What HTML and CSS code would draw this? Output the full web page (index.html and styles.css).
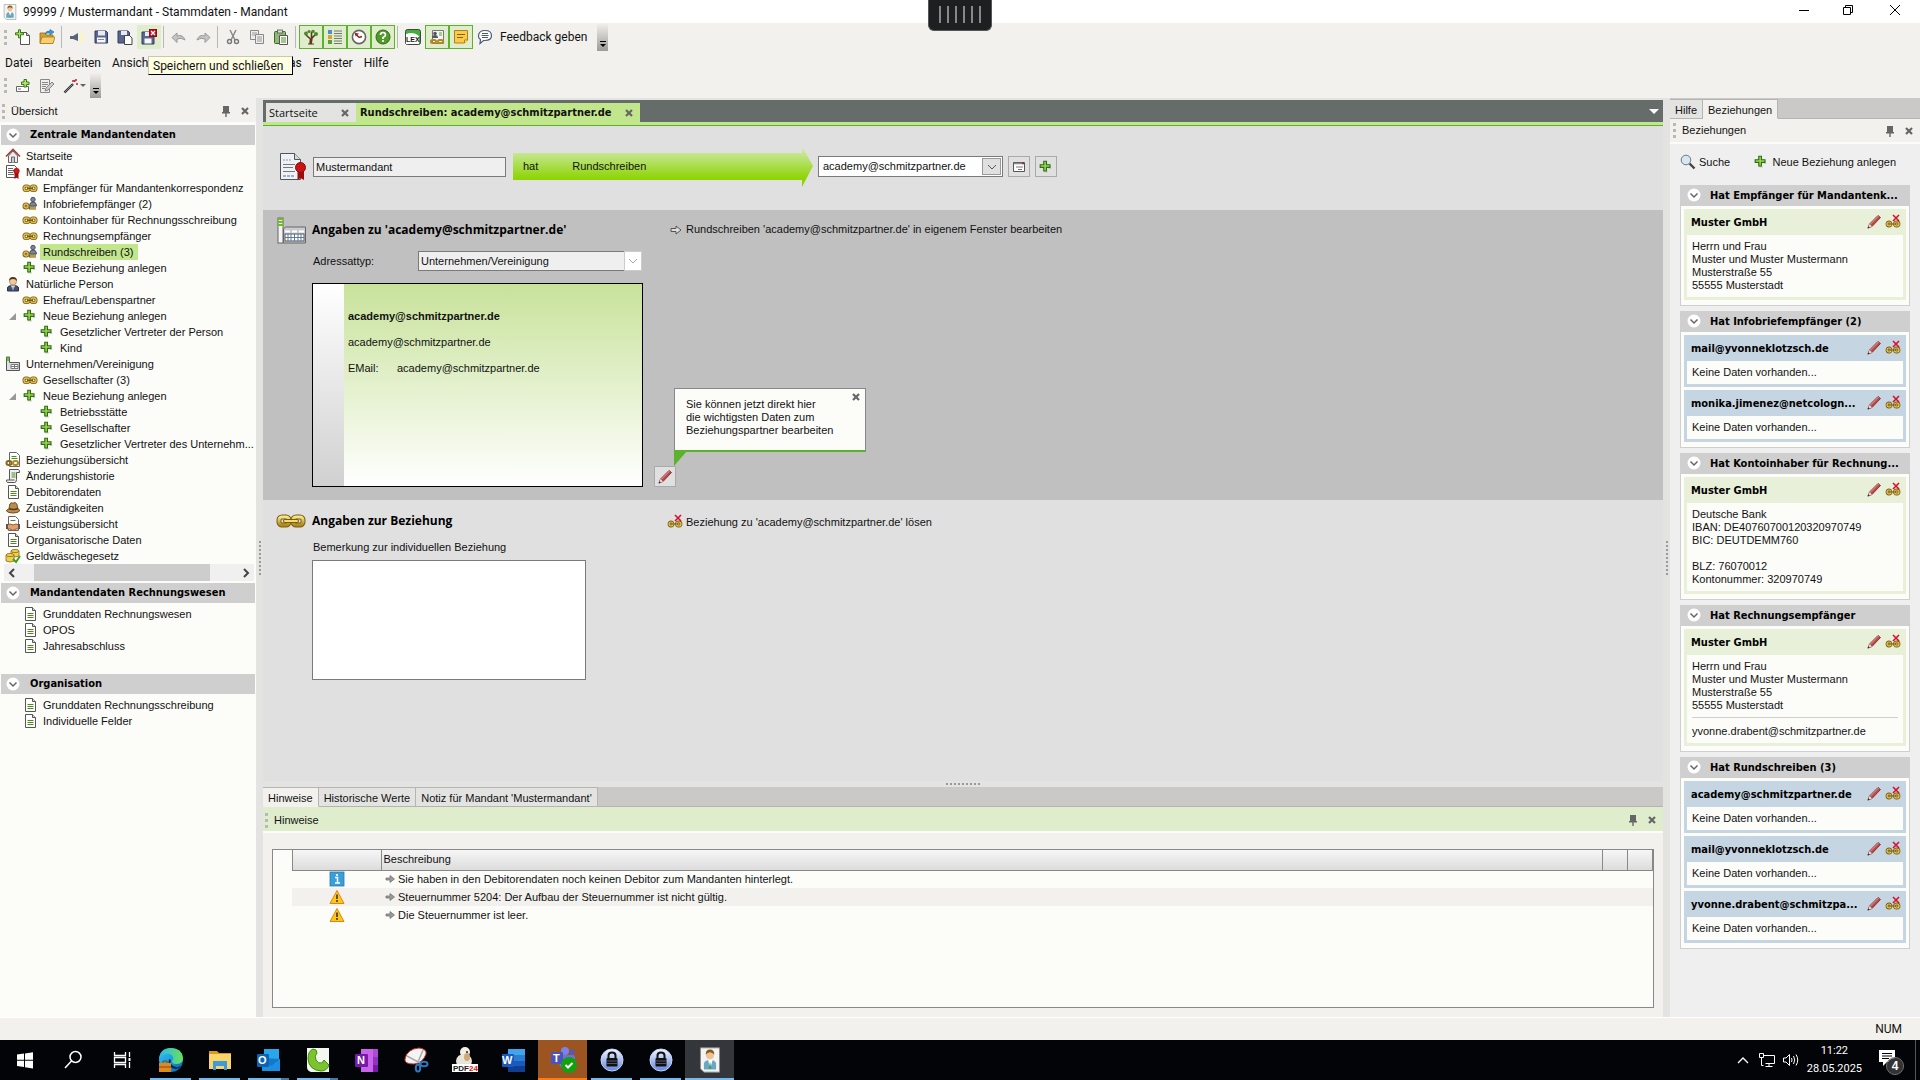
FILE: index.html
```html
<!DOCTYPE html>
<html lang="de">
<head>
    <meta charset="UTF-8">
    <meta name="viewport" content="width=device-width, initial-scale=1.0">
    <title>99999 / Mustermandant - Stammdaten - Mandant</title>
    <link rel="stylesheet" href="styles.css">
</head>
<body>
    <!-- Icon sprite -->
    <svg class="sprite" aria-hidden="true">
        <defs>
            <linearGradient id="g-metal" x1="0" y1="0" x2="0" y2="1"><stop offset="0" stop-color="#f6e58a"/><stop offset="1" stop-color="#b08a1c"/></linearGradient>
            <linearGradient id="g-arrow" x1="0" y1="0" x2="0" y2="1"><stop offset="0" stop-color="#d9ebc0"/><stop offset="0.2" stop-color="#c3e68c"/><stop offset="0.8" stop-color="#8ed404"/><stop offset="1" stop-color="#8ed404"/></linearGradient>
            <linearGradient id="g-edge" x1="0" y1="0" x2="1" y2="1"><stop offset="0" stop-color="#35c1f1"/><stop offset="0.5" stop-color="#1b9de2"/><stop offset="1" stop-color="#0c59a4"/></linearGradient>
            <linearGradient id="g-edge2" x1="0" y1="0" x2="1" y2="0"><stop offset="0" stop-color="#2bb8ee"/><stop offset="1" stop-color="#6ae05a"/></linearGradient>
            <linearGradient id="g-lock" x1="0" y1="0" x2="0" y2="1"><stop offset="0" stop-color="#f2f5ff"/><stop offset="1" stop-color="#5f86e0"/></linearGradient>
        </defs>
        <symbol id="i-plus" viewBox="0 0 18 18"><path d="M7 14.500h4M12 10.500h3" stroke="#bbb"/><path d="M6.500 2.500h3v4h4v3h-4v4h-3v-4h-4v-3h4z" fill="#9fd455" stroke="#2c7010" stroke-width="1.300"/></symbol>
        <symbol id="i-chain" viewBox="0 0 16 16"><g fill="none" stroke="#7a5c10" stroke-width="3"><rect x="2" y="6" width="5" height="4.500" rx="2"/><rect x="9" y="6" width="5" height="4.500" rx="2"/></g><g fill="none" stroke="#e0c050" stroke-width="1.400"><rect x="2" y="6" width="5" height="4.500" rx="2"/><rect x="9" y="6" width="5" height="4.500" rx="2"/></g><path d="M5 8.300h6" stroke="#7a5c10" stroke-width="1.500"/></symbol>
        <symbol id="i-chain-big" viewBox="0 0 30 16"><g fill="none" stroke="#7a5c10" stroke-width="5"><rect x="3" y="4" width="10" height="8" rx="3"/><rect x="17" y="4" width="10" height="8" rx="3"/></g><g fill="none" stroke="url(#g-metal)" stroke-width="3"><rect x="3" y="4" width="10" height="8" rx="3"/><rect x="17" y="4" width="10" height="8" rx="3"/></g><path d="M9 8h12" stroke="#7a5c10" stroke-width="4" stroke-linecap="round"/><path d="M9 8h12" stroke="#f0dc70" stroke-width="2" stroke-linecap="round"/></symbol>
        <symbol id="i-chain-person" viewBox="0 0 16 16"><g fill="none" stroke="#7a5c10" stroke-width="3"><rect x="2" y="8" width="4" height="4" rx="2"/><path d="M7 12h7"/></g><g fill="none" stroke="#e0c050" stroke-width="1.300"><rect x="2" y="8" width="4" height="4" rx="2"/><path d="M8 12h6"/></g><circle cx="11" cy="3.500" r="2.200" fill="#7d8594" stroke="#4c5566"/><path d="M7.500 10q0-4 3.500-4t3.500 4z" fill="#7d8594" stroke="#4c5566"/></symbol>
        <symbol id="i-unlink" viewBox="0 0 16 16"><g fill="none" stroke="#7a5c10" stroke-width="2.800"><rect x="2" y="8" width="4" height="4" rx="2"/><rect x="9.500" y="8" width="4.500" height="4" rx="2"/></g><g fill="none" stroke="#e8cc58" stroke-width="1.200"><rect x="2" y="8" width="4" height="4" rx="2"/><rect x="9.500" y="8" width="4.500" height="4" rx="2"/></g><path d="M5 10h6" stroke="#7a5c10"/><path d="M8 1l6 6M14 1l-6 6" stroke="#d81030" stroke-width="1.600"/></symbol>
        <symbol id="i-pencil" viewBox="0 0 16 16"><path d="M2 14l1.500-4L12 1.500l2.500 2L6 12.500z" fill="#b84a4a" stroke="#7a2020" stroke-width="0.800"/><path d="M4 10.500l8.500-8.500" stroke="#e9a0a0"/><path d="M2 14l1.500-4L6 12.500z" fill="#e5dccb"/><path d="M1.500 14.500l.8-2.200 1.500 1.500z" fill="#2a3050"/></symbol>
        <symbol id="i-doc" viewBox="0 0 16 16"><path d="M3.500 1.500h7l3 3v10h-10z" fill="#fff" stroke="#555"/><path d="M10.500 1.500v3h3" fill="#ddd" stroke="#555"/><path d="M5.500 7.500h6M5.500 9.500h6M5.500 11.500h6" stroke="#4c8a20"/></symbol>
        <symbol id="i-doc-chain" viewBox="0 0 16 16"><path d="M4.500 .5h7l3 3v11h-10z" fill="#fff" stroke="#666"/><path d="M6.500 4.500h5M6.500 6.500h6" stroke="#4c8a20"/><rect x="1.500" y="9" width="5" height="4" rx="2" fill="none" stroke="#8a6a18" stroke-width="2"/><rect x="8" y="9" width="5" height="4" rx="2" fill="none" stroke="#b08a30" stroke-width="2"/></symbol>
        <symbol id="i-scroll" viewBox="0 0 16 16"><path d="M4.500 1.500h9q1 0 1 3h-3v7q0 3-2 3h-7q-1 0-1-2.500h3z" fill="#f0f0f0" stroke="#555"/><path d="M6.500 5h4M6.500 7h4M6.500 9h4" stroke="#4c8a20"/><path d="M4.500 12h5" stroke="#555"/></symbol>
        <symbol id="i-hat" viewBox="0 0 16 16"><path d="M4 9l.8-5q1.200-2 3-.8 3-1.500 4 .8L13 9q2 .5 1.500 2-1.500 2-6.500 2T1.500 11Q1 10 4 9z" fill="#b98a52" stroke="#74501f"/><path d="M4 8.500q4 2 9 0" stroke="#5a3a12" fill="none" stroke-width="1.500"/></symbol>
        <symbol id="i-doc-hands" viewBox="0 0 16 16"><path d="M3.500 .5h7l3 3v11h-10z" fill="#fff" stroke="#666"/><path d="M5.500 4.500h5" stroke="#4c8a20"/><path d="M2 9l3-1 3 1 3-1 3 1v4l-3 0-3 1.500L5 13H2z" fill="#e0a070" stroke="#9a5a30"/><path d="M1 8h2v5H1zM13 8h2v5h-2z" fill="#555"/></symbol>
        <symbol id="i-coins" viewBox="0 0 16 16"><g fill="#ecd050" stroke="#8a6a18" stroke-width=".8"><path d="M6 3v5q4 2 8 0V3z"/><ellipse cx="10" cy="3" rx="4" ry="1.600"/><path d="M1 7v6q4 2 8 0V7z"/><ellipse cx="5" cy="7" rx="4" ry="1.600"/></g><path d="M8 11l3 3 4-6" fill="none" stroke="#3f9d1a" stroke-width="2"/></symbol>
        <symbol id="i-home" viewBox="0 0 16 16"><path d="M3.500 8v6.500h9V8L8 3z" fill="#eee" stroke="#666"/><path d="M1 8.500l7-7 7 7" fill="none" stroke="#9c4040" stroke-width="1.600"/><path d="M6.500 14.500V9h3v5.500" fill="#c9cdd2" stroke="#666"/></symbol>
        <symbol id="i-mandat" viewBox="0 0 16 16"><path d="M1.500 1.500h8l2 2v10h-10z" fill="#fff" stroke="#555"/><path d="M3 4.500h5M3 6.500h6M3 8.500h5M3 10.500h6" stroke="#666"/><path d="M9.500 9v6l2-1.500 2 1.500V9z" fill="#a01010"/><circle cx="11.500" cy="7" r="2.800" fill="#d01818" stroke="#8a0c0c" stroke-width=".6"/></symbol>
        <symbol id="i-cert" viewBox="0 0 26 30"><path d="M.5 1.500h14l6 6v20H.5z" fill="#eef1f6" stroke="#555"/><path d="M14.500 1.500v6h6" fill="#d5d8de" stroke="#555"/><path d="M3 8h9" stroke="#999" stroke-dasharray="2 1"/><path d="M3 12.500h12M3 15.500h10M3 19.500h12" stroke="#777"/><path d="M3 24h12" stroke="#4c6cb8" stroke-dasharray="3 1"/><path d="M17.500 18v10l3-2 3.500 2V18z" fill="#9c0c0c"/><circle cx="20.500" cy="15.500" r="5" fill="#c81414" stroke="#8a0c0c"/></symbol>
        <symbol id="i-person" viewBox="0 0 16 16"><path d="M2.500 15V12q0-2.500 5.500-2.500t5.500 2.500v3z" fill="#46506a" stroke="#2a3046"/><path d="M6 9.500h4l-2 5z" fill="#fff"/><path d="M8 10.500v4" stroke="#3a6ac0"/><circle cx="8" cy="5.500" r="3.500" fill="#f0c8a0" stroke="#9a6a40" stroke-width=".6"/><path d="M4 5q0-4 4-4t4 4q-1-2-4-2T4 5z" fill="#5a3010"/></symbol>
        <symbol id="i-factory" viewBox="0 0 30 28"><rect x="1" y="1" width="5" height="25" fill="#f4f4f4" stroke="#666"/><path d="M1 2h5M1 5h5M1 8h5" stroke="#6cc018" stroke-width="2"/><path d="M6.500 12l2-2h20v16h-22z" fill="#c8ccce" stroke="#666"/><path d="M8 14.500h5M15 14.500h5M22 14.500h5" stroke="#fff" stroke-width="2"/><rect x="8" y="17" width="19" height="7" fill="#fff" stroke="#556"/><path d="M8 20.500h19M11 17v7M14 17v7M17.500 17v7M21 17v7M24 17v7" stroke="#5a7a9a"/></symbol>
        <symbol id="i-factory-small" viewBox="0 0 16 16"><path d="M1.500 1v13.500h13v-8h-10V1z" fill="#dde0e2" stroke="#555"/><path d="M1.500 2h3M1.500 4h3" stroke="#4cae10" stroke-width="1.500"/><path d="M6 8.500h7v4H6z" fill="#fff" stroke="#777"/><path d="M9.500 8v5M6 10.500h7" stroke="#777"/></symbol>
        <symbol id="i-pin" viewBox="0 0 16 16"><path d="M5 3h6v6h1v1.500H8.700V14H7.300v-3.500H4V9h1z" fill="#666"/></symbol>
        <symbol id="i-close" viewBox="0 0 16 16"><path d="M5 5l6 6M11 5l-6 6" stroke="#666" stroke-width="2.200"/></symbol>
        <symbol id="i-chev" viewBox="0 0 14 14"><circle cx="7" cy="7" r="6.500" fill="#fff"/><path d="M3.500 5.500L7 9l3.500-3.500" fill="none" stroke="#666" stroke-width="1.500"/></symbol>
        <symbol id="i-go" viewBox="0 0 12 12"><path d="M1 4.500h5V2l5 4-5 4V7.500H1z" fill="#ddd" stroke="#555"/></symbol>
        <symbol id="i-go-small" viewBox="0 0 12 12"><path d="M2 5h4V2.500L10.500 6 6 9.500V7H2z" fill="#999" stroke="#777" stroke-width=".8"/></symbol>
        <symbol id="i-search" viewBox="0 0 16 16"><path d="M9.500 9.500l5 5" stroke="#444" stroke-width="2.400"/><circle cx="6" cy="6" r="4.800" fill="#d4e8f4" stroke="#777"/></symbol>
        <symbol id="i-new" viewBox="0 0 16 16"><path d="M5.500 3.500h6l3 3v9h-9z" fill="#fff" stroke="#555"/><path d="M11.500 3.500v3h3" fill="#ccc" stroke="#555"/><path d="M3.500 .8h2v3h3v2h-3v3h-2v-3h-3v-2h3z" fill="#b9e06a" stroke="#2f7d10"/></symbol>
        <symbol id="i-open" viewBox="0 0 16 16"><path d="M1 14V4h5l1 2h7v8z" fill="#d8a030" stroke="#9a6a10" stroke-width=".8"/><path d="M3 8h13l-2 6.500H1z" fill="#f6d070" stroke="#a87818" stroke-width=".8"/><path d="M6 5q1-3.500 5-3V.5L15 3l-4 3V4Q8 3.500 6 5z" fill="#3c9ad8" stroke="#1a6aa8" stroke-width=".6"/></symbol>
        <symbol id="i-horn" viewBox="0 0 16 16"><path d="M1 7h3l5-3v8L4 10H1z" fill="#5a6478"/><path d="M10 4l5-2v12l-5-2z" fill="#f8f4cc"/></symbol>
        <symbol id="i-save" viewBox="0 0 16 16"><path d="M2 2h11l1.500 1.500V14H2z" fill="#5a6690" stroke="#333c60"/><rect x="5" y="2" width="7" height="4.500" fill="#e8ebf4"/><rect x="4" y="8.500" width="8.500" height="5" fill="#f6f8ff"/><path d="M5 10.500h6" stroke="#889"/></symbol>
        <symbol id="i-saveas" viewBox="0 0 16 16"><path d="M1 2h10l1.500 1.500V14H1z" fill="#5a6690" stroke="#333c60"/><rect x="4" y="2" width="6" height="4" fill="#e8ebf4"/><path d="M7.500 6.500h5l2.500 2.500v6.500H7.500z" fill="#fff" stroke="#444"/></symbol>
        <symbol id="i-saveclose" viewBox="0 0 16 16"><path d="M1 3h12v12H1z" fill="#5a6690" stroke="#333c60"/><rect x="4" y="3" width="5" height="4" fill="#e8ebf4"/><rect x="3.500" y="9.500" width="7" height="5" fill="#f6f8ff"/><rect x="8.500" y=".5" width="7" height="7" fill="#c40f22" stroke="#8a0c18"/><path d="M10 2l4 4M14 2l-4 4" stroke="#fff" stroke-width="1.300"/></symbol>
        <symbol id="i-undo" viewBox="0 0 16 16"><path d="M1 8.500L6 4v3q6-2 8 4-4-3-8-1v3.500z" fill="#c4c4c4" stroke="#999"/></symbol>
        <symbol id="i-redo" viewBox="0 0 16 16"><path d="M15 8.500L10 4v3Q4 5 2 11q4-3 8-1v3.500z" fill="#c4c4c4" stroke="#999"/></symbol>
        <symbol id="i-cut" viewBox="0 0 16 16"><path d="M5 1l5 10M11 1L6 11" stroke="#888" stroke-width="1.500"/><circle cx="4.500" cy="12.500" r="2" fill="none" stroke="#777" stroke-width="1.400"/><circle cx="11.500" cy="12.500" r="2" fill="none" stroke="#777" stroke-width="1.400"/></symbol>
        <symbol id="i-copy" viewBox="0 0 16 16"><g fill="#eee" stroke="#888"><path d="M1.500 1.500h8v9h-8z"/><path d="M6.500 5.500h8v9h-8z"/></g><path d="M3 4h5M3 6h3M8 8h5M8 10h5M8 12h5" stroke="#999"/></symbol>
        <symbol id="i-paste" viewBox="0 0 16 16"><rect x="1.500" y="2.500" width="11" height="12" rx="1" fill="#8fb874" stroke="#3c6a24"/><rect x="4.500" y="1" width="5" height="3" fill="#ddd" stroke="#555" stroke-width=".8"/><path d="M6.500 6.500h8v9h-8z" fill="#fff" stroke="#555"/><path d="M8 9h5M8 11h5M8 13h5" stroke="#4c8a20"/></symbol>
        <symbol id="i-tree" viewBox="0 0 16 16"><path d="M7 15l.5-5L3 6M8 15l1-6 4-4M8.500 9V3" fill="none" stroke="#5a3a1a" stroke-width="1.600"/><g fill="#4f8a28"><circle cx="3" cy="4.500" r="2"/><circle cx="6" cy="2.500" r="1.600"/><circle cx="10" cy="2.500" r="1.800"/><circle cx="13" cy="5" r="2"/></g><path d="M5 15h6" stroke="#5a3a1a"/></symbol>
        <symbol id="i-list" viewBox="0 0 16 16"><path d="M1 1h4v4H1z" fill="#4a90d0"/><path d="M1 6h4v4H1z" fill="#e0a030"/><path d="M1 11h4v4H1z" fill="#58a030"/><path d="M7 2h8M7 4.500h8M7 7h8M7 9.500h8M7 12h8M7 14.500h8" stroke="#777"/></symbol>
        <symbol id="i-clock" viewBox="0 0 16 16"><circle cx="8" cy="8" r="6.600" fill="#fff" stroke="#666" stroke-width="1.600"/><path d="M8 8.500L4.500 4.500M8 8.500l3-1" stroke="#a02020" stroke-width="1.600"/><path d="M4 4l4 .5-3.500 3z" fill="#a02020"/></symbol>
        <symbol id="i-help" viewBox="0 0 16 16"><circle cx="8" cy="8" r="7" fill="#4f9a28" stroke="#2c6a10"/><path d="M5.500 6q0-2.500 2.500-2.500T10.500 6Q10.500 7.300 8 8.500v1.500" fill="none" stroke="#fff" stroke-width="1.700"/><circle cx="8" cy="12" r="1.100" fill="#fff"/></symbol>
        <symbol id="i-people" viewBox="0 0 16 16"><path d="M3.500 1.500h11v13h-11z" fill="#f4f4f4" stroke="#777"/><circle cx="6" cy="4.500" r="1.800" fill="#556"/><path d="M3 9q0-3 3-3t3 3z" fill="#556"/><path d="M10 4h3M10 6h3" stroke="#58a030"/><rect x="2" y="11" width="5" height="3" rx="1.500" fill="none" stroke="#b08a1c" stroke-width="2"/><rect x="9" y="11" width="5" height="3" rx="1.500" fill="none" stroke="#b08a1c" stroke-width="2"/></symbol>
        <symbol id="i-note" viewBox="0 0 16 16"><path d="M1.500 1.500h13v9.500l-3 3h-10z" fill="#f8cc48" stroke="#b08018"/><path d="M14.500 11h-3v3" fill="#fff0b0" stroke="#b08018"/><path d="M4 5.500h8M4 8.500h6" stroke="#8a6010"/></symbol>
        <symbol id="i-bubble" viewBox="0 0 16 16"><path d="M8 1.500q6.500 0 6.500 5T8 11.500H6.500l-3.500 3 .5-4Q1 8.500 1.500 6.500 2 1.500 8 1.500z" fill="#fff" stroke="#4a5a7a" stroke-width="1.200"/><path d="M5 4.500h6M4.500 6.500h7M5 8.500h6" stroke="#4a5a7a"/></symbol>
        <symbol id="i-cardplus" viewBox="0 0 16 16"><path d="M1.500 8.500h12v5h-12z" fill="#fff" stroke="#666"/><path d="M3 11h3" stroke="#666"/><path d="M9 1.500h2.500V4H14v2.500h-2.500V9H9V6.500H6.500V4H9z" fill="#b9e06a" stroke="#2f7d10"/></symbol>
        <symbol id="i-editdoc" viewBox="0 0 16 16"><path d="M1.500 1.500h9v13h-9z" fill="#eee" stroke="#888"/><path d="M3 4.500h6M3 6.500h6M3 8.500h4M3 10.500h3" stroke="#888"/><path d="M6 13l1-3 6-6 2 2-6 6z" fill="#ccc" stroke="#888"/></symbol>
        <symbol id="i-wand" viewBox="0 0 16 16"><path d="M1.500 14.500L10 6" stroke="#333" stroke-width="2.400"/><path d="M2 14l7.500-7.500" stroke="#999" stroke-width=".8"/><path d="M9 3h2M13 1v2M13 6h2M11 2l1 2" stroke="#c02030" stroke-width="1.500"/></symbol>
        <symbol id="i-window" viewBox="0 0 16 16"><path d="M2.500 3.500h11v9h-11z" fill="#fff" stroke="#555"/><path d="M3 4.500h8" stroke="#888" stroke-width="1.500"/><path d="M11 4.500h2" stroke="#c02020" stroke-width="1.500"/><path d="M5 8h7M7 10.500h4" stroke="#777"/></symbol>
        <symbol id="i-info" viewBox="0 0 16 16"><rect x="1" y="1" width="14" height="14" fill="#3a9fd8" stroke="#2a7ab0" stroke-width=".8"/><path d="M6 6.500h2.500V12M6 12h5" stroke="#fff" stroke-width="1.500" fill="none"/><circle cx="8" cy="4" r="1.100" fill="#fff"/></symbol>
        <symbol id="i-warn" viewBox="0 0 16 16"><path d="M8 1.500L15 14.500H1z" fill="#ffc810" stroke="#e88020"/><path d="M8 5.500v4.500" stroke="#333" stroke-width="1.600"/><circle cx="8" cy="12" r="1" fill="#333"/></symbol>
        <symbol id="i-userpic" viewBox="0 0 24 30"><path d="M1 1h22v28H5l-4-4z" fill="#f4f4f0" stroke="#888"/><path d="M5 26V19q1-4 7-4t7 4v7z" fill="#6aa6c8"/><path d="M10 15l2 11 3-11z" fill="#fff"/><path d="M12 17l-1.500 8h3z" fill="#3a9a50"/><circle cx="12" cy="9.500" r="4.500" fill="#ecc296"/><path d="M7 9q0-6 5-6t5 6q-2-3-5-3T7 9z" fill="#8a5a20"/></symbol>
    </svg>

    <!-- Title bar -->
    <header class="titlebar">
        <svg class="app-icon"><use href="#i-userpic"/></svg>
        <span class="app-title">99999 / Mustermandant - Stammdaten - Mandant</span>
        <div class="window-buttons">
            <button aria-label="Minimieren"><svg viewBox="0 0 12 12"><path d="M1 6.500h10" stroke="#000"/></svg></button>
            <button aria-label="Verkleinern"><svg viewBox="0 0 12 12"><path d="M1.500 3.500h7v7h-7zM3.500 3.500v-2h7v7h-2" fill="none" stroke="#000"/></svg></button>
            <button aria-label="Schließen"><svg viewBox="0 0 12 12"><path d="M1 1l10 10M11 1L1 11" stroke="#000"/></svg></button>
        </div>
        <div class="session-handle"><i></i><i></i><i></i><i></i><i></i><i></i></div>
    </header>

    <!-- Toolbars and menu -->
    <div class="toolbar">
        <span class="grip"></span>
        <button class="tool" aria-label="Neu"><svg><use href="#i-new"/></svg></button>
        <button class="tool" aria-label="Öffnen"><svg><use href="#i-open"/></svg></button>
        <span class="sep"></span>
        <button class="tool" aria-label="Hinweis"><svg><use href="#i-horn"/></svg></button>
        <button class="tool" aria-label="Speichern"><svg><use href="#i-save"/></svg></button>
        <button class="tool" aria-label="Speichern unter"><svg><use href="#i-saveas"/></svg></button>
        <button class="tool hot" aria-label="Speichern und schließen"><svg><use href="#i-saveclose"/></svg></button>
        <span class="sep"></span>
        <button class="tool" aria-label="Rückgängig"><svg><use href="#i-undo"/></svg></button>
        <button class="tool" aria-label="Wiederholen"><svg><use href="#i-redo"/></svg></button>
        <span class="sep"></span>
        <button class="tool" aria-label="Ausschneiden"><svg><use href="#i-cut"/></svg></button>
        <button class="tool" aria-label="Kopieren"><svg><use href="#i-copy"/></svg></button>
        <button class="tool" aria-label="Einfügen"><svg><use href="#i-paste"/></svg></button>
        <span class="sep"></span>
        <button class="tool on" aria-label="Übersicht"><svg><use href="#i-tree"/></svg></button>
        <button class="tool on" aria-label="Liste"><svg><use href="#i-list"/></svg></button>
        <button class="tool on" aria-label="Historie"><svg><use href="#i-clock"/></svg></button>
        <button class="tool on" aria-label="Hilfe"><svg><use href="#i-help"/></svg></button>
        <span class="sep"></span>
        <button class="tool" aria-label="Lexinform"><svg viewBox="0 0 16 16"><rect x=".5" y=".5" width="15" height="15" rx="2" fill="#3fae3a" stroke="#444"/><path d="M1 15V5q8-3 13 2v8z" fill="#fff"/><text class="lex" x="1" y="13">LEX</text></svg></button>
        <button class="tool on" aria-label="Beziehungen"><svg><use href="#i-people"/></svg></button>
        <button class="tool on" aria-label="Notiz"><svg><use href="#i-note"/></svg></button>
        <button class="tool-text"><svg><use href="#i-bubble"/></svg>Feedback geben</button>
        <button class="overflow" aria-label="Weitere Schaltflächen"></button>
    </div>
    <nav class="menubar">
        <a href="#">Datei</a>
        <a href="#">Bearbeiten</a>
        <a href="#">Ansicht</a>
        <a href="#" class="menu-extras">Extras</a>
        <a href="#">Fenster</a>
        <a href="#">Hilfe</a>
        <div class="tooltip" role="tooltip">Speichern und schließen</div>
    </nav>
    <div class="toolbar toolbar-small">
        <span class="grip"></span>
        <button class="tool" aria-label="Beziehung anlegen"><svg><use href="#i-cardplus"/></svg></button>
        <button class="tool" aria-label="Bearbeiten"><svg><use href="#i-editdoc"/></svg></button>
        <button class="tool" aria-label="Assistent"><svg><use href="#i-wand"/></svg></button>
        <span class="caret"></span>
        <button class="overflow" aria-label="Weitere Schaltflächen"></button>
    </div>

    <main class="workspace">
        <!-- Navigation -->
        <aside class="nav">
            <div class="pane-head"><span class="grip"></span><span>Übersicht</span>
                <button aria-label="Anheften"><svg><use href="#i-pin"/></svg></button>
                <button aria-label="Schließen"><svg><use href="#i-close"/></svg></button>
            </div>
            <h2 class="bar"><svg><use href="#i-chev"/></svg>Zentrale Mandantendaten</h2>
            <ul class="tree">
                <li><svg><use href="#i-home"/></svg><a href="#">Startseite</a></li>
                <li><svg><use href="#i-mandat"/></svg><a href="#">Mandat</a></li>
                <li class="l1"><svg><use href="#i-chain"/></svg><a href="#">Empfänger für Mandantenkorrespondenz</a></li>
                <li class="l1"><svg><use href="#i-chain-person"/></svg><a href="#">Infobriefempfänger (2)</a></li>
                <li class="l1"><svg><use href="#i-chain"/></svg><a href="#">Kontoinhaber für Rechnungsschreibung</a></li>
                <li class="l1"><svg><use href="#i-chain"/></svg><a href="#">Rechnungsempfänger</a></li>
                <li class="l1"><svg><use href="#i-chain-person"/></svg><a href="#" class="selected">Rundschreiben (3)</a></li>
                <li class="l1"><svg><use href="#i-plus"/></svg><a href="#">Neue Beziehung anlegen</a></li>
                <li><svg><use href="#i-person"/></svg><a href="#">Natürliche Person</a></li>
                <li class="l1"><svg><use href="#i-chain"/></svg><a href="#">Ehefrau/Lebenspartner</a></li>
                <li class="l1 open"><svg><use href="#i-plus"/></svg><a href="#">Neue Beziehung anlegen</a></li>
                <li class="l2"><svg><use href="#i-plus"/></svg><a href="#">Gesetzlicher Vertreter der Person</a></li>
                <li class="l2"><svg><use href="#i-plus"/></svg><a href="#">Kind</a></li>
                <li><svg><use href="#i-factory-small"/></svg><a href="#">Unternehmen/Vereinigung</a></li>
                <li class="l1"><svg><use href="#i-chain"/></svg><a href="#">Gesellschafter (3)</a></li>
                <li class="l1 open"><svg><use href="#i-plus"/></svg><a href="#">Neue Beziehung anlegen</a></li>
                <li class="l2"><svg><use href="#i-plus"/></svg><a href="#">Betriebsstätte</a></li>
                <li class="l2"><svg><use href="#i-plus"/></svg><a href="#">Gesellschafter</a></li>
                <li class="l2"><svg><use href="#i-plus"/></svg><a href="#">Gesetzlicher Vertreter des Unternehm...</a></li>
                <li><svg><use href="#i-doc-chain"/></svg><a href="#">Beziehungsübersicht</a></li>
                <li><svg><use href="#i-scroll"/></svg><a href="#">Änderungshistorie</a></li>
                <li><svg><use href="#i-doc"/></svg><a href="#">Debitorendaten</a></li>
                <li><svg><use href="#i-hat"/></svg><a href="#">Zuständigkeiten</a></li>
                <li><svg><use href="#i-doc-hands"/></svg><a href="#">Leistungsübersicht</a></li>
                <li><svg><use href="#i-doc"/></svg><a href="#">Organisatorische Daten</a></li>
                <li><svg><use href="#i-coins"/></svg><a href="#">Geldwäschegesetz</a></li>
            </ul>
            <div class="hscroll">
                <svg viewBox="0 0 8 10"><path d="M6 1L2 5l4 4" fill="none" stroke="#444" stroke-width="2"/></svg>
                <span class="track"><span class="thumb"></span></span>
                <svg viewBox="0 0 8 10"><path d="M2 1l4 4-4 4" fill="none" stroke="#444" stroke-width="2"/></svg>
            </div>
            <h2 class="bar"><svg><use href="#i-chev"/></svg>Mandantendaten Rechnungswesen</h2>
            <ul class="tree tree-short">
                <li class="l1"><svg><use href="#i-doc"/></svg><a href="#">Grunddaten Rechnungswesen</a></li>
                <li class="l1"><svg><use href="#i-doc"/></svg><a href="#">OPOS</a></li>
                <li class="l1"><svg><use href="#i-doc"/></svg><a href="#">Jahresabschluss</a></li>
            </ul>
            <h2 class="bar"><svg><use href="#i-chev"/></svg>Organisation</h2>
            <ul class="tree tree-short">
                <li class="l1"><svg><use href="#i-doc"/></svg><a href="#">Grunddaten Rechnungsschreibung</a></li>
                <li class="l1"><svg><use href="#i-doc"/></svg><a href="#">Individuelle Felder</a></li>
            </ul>
        </aside>

        <div class="splitter"><span class="dots-v"></span></div>

        <!-- Document area -->
        <section class="content">
            <div class="doc-tabs">
                <a href="#" class="doc-tab">Startseite <svg><use href="#i-close"/></svg></a>
                <a href="#" class="doc-tab active">Rundschreiben: academy@schmitzpartner.de <svg><use href="#i-close"/></svg></a>
                <span class="doc-menu"></span>
            </div>
            <div class="document">
                <div class="relation">
                    <svg class="big-icon cert"><use href="#i-cert"/></svg>
                    <input type="text" class="field" value="Mustermandant" readonly aria-label="Mandant">
                    <div class="arrow">
                        <svg viewBox="0 0 300 42" preserveAspectRatio="none"><path d="M0 7h289V0l11 20-11 21v-7H0z" fill="url(#g-arrow)"/></svg>
                        <span>hat</span><span>Rundschreiben</span>
                    </div>
                    <div class="select partner">
                        <select aria-label="Beziehungspartner"><option>academy@schmitzpartner.de</option></select>
                        <span class="drop"><svg viewBox="0 0 10 6"><path d="M1 1l4 4 4-4" fill="none" stroke="#555"/></svg></span>
                    </div>
                    <button class="square" aria-label="Auswählen"><svg><use href="#i-window"/></svg></button>
                    <button class="square" aria-label="Neu anlegen"><svg><use href="#i-plus"/></svg></button>
                </div>

                <div class="details">
                    <svg class="big-icon"><use href="#i-factory"/></svg>
                    <div class="col-form">
                        <h3>Angaben zu 'academy@schmitzpartner.de'</h3>
                        <div class="form-row">
                            <label for="adressattyp">Adressattyp:</label>
                            <div class="select typ">
                                <select id="adressattyp"><option>Unternehmen/Vereinigung</option></select>
                                <span class="drop"><svg viewBox="0 0 10 6"><path d="M1 1l4 4 4-4" fill="none" stroke="#aaa"/></svg></span>
                            </div>
                        </div>
                        <div class="address-card">
                            <strong>academy@schmitzpartner.de</strong>
                            <p>academy@schmitzpartner.de</p>
                            <p><span class="key">EMail:</span>academy@schmitzpartner.de</p>
                        </div>
                    </div>
                    <div class="col-side">
                        <a href="#" class="action"><svg class="go"><use href="#i-go"/></svg>Rundschreiben 'academy@schmitzpartner.de' in eigenem Fenster bearbeiten</a>
                        <div class="edit-spot">
                            <button class="square" aria-label="Bearbeiten"><svg><use href="#i-pencil"/></svg></button>
                            <div class="balloon">
                                Sie können jetzt direkt hier<br>die wichtigsten Daten zum<br>Beziehungspartner bearbeiten
                                <button aria-label="Schließen"><svg><use href="#i-close"/></svg></button>
                            </div>
                        </div>
                    </div>
                </div>

                <div class="details details-plain">
                    <svg class="big-icon chain"><use href="#i-chain-big"/></svg>
                    <div class="col-form">
                        <h3>Angaben zur Beziehung</h3>
                        <label class="note-label" for="bemerkung">Bemerkung zur individuellen Beziehung</label>
                        <textarea id="bemerkung"></textarea>
                    </div>
                    <div class="col-side">
                        <a href="#" class="action"><svg><use href="#i-unlink"/></svg>Beziehung zu 'academy@schmitzpartner.de' lösen</a>
                    </div>
                </div>
            </div>

            <div class="splitter-h"><span class="dots-h"></span></div>
            <div class="pane-tabs">
                <a href="#" class="active">Hinweise</a>
                <a href="#">Historische Werte</a>
                <a href="#">Notiz für Mandant 'Mustermandant'</a>
            </div>
            <div class="pane-head green"><span class="grip"></span><span>Hinweise</span>
                <button aria-label="Anheften"><svg><use href="#i-pin"/></svg></button>
                <button aria-label="Schließen"><svg><use href="#i-close"/></svg></button>
            </div>
            <div class="hints">
                <div class="hints-box">
                    <table>
                        <thead>
                            <tr><th class="c-mark"></th><th class="c-icon"></th><th>Beschreibung</th><th class="c-end"></th><th class="c-end"></th></tr>
                        </thead>
                        <tbody>
                            <tr><td></td><td class="icon"><svg><use href="#i-info"/></svg></td><td colspan="3"><svg class="go"><use href="#i-go-small"/></svg>Sie haben in den Debitorendaten noch keinen Debitor zum Mandanten hinterlegt.</td></tr>
                            <tr><td></td><td class="icon"><svg><use href="#i-warn"/></svg></td><td colspan="3"><svg class="go"><use href="#i-go-small"/></svg>Steuernummer 5204: Der Aufbau der Steuernummer ist nicht gültig.</td></tr>
                            <tr><td></td><td class="icon"><svg><use href="#i-warn"/></svg></td><td colspan="3"><svg class="go"><use href="#i-go-small"/></svg>Die Steuernummer ist leer.</td></tr>
                        </tbody>
                    </table>
                </div>
            </div>
        </section>

        <div class="splitter"><span class="dots-v"></span></div>

        <!-- Relations -->
        <aside class="relations">
            <div class="pane-tabs">
                <a href="#">Hilfe</a>
                <a href="#" class="active">Beziehungen</a>
            </div>
            <div class="pane-head"><span class="grip"></span><span>Beziehungen</span>
                <button aria-label="Anheften"><svg><use href="#i-pin"/></svg></button>
                <button aria-label="Schließen"><svg><use href="#i-close"/></svg></button>
            </div>
            <div class="rel-actions">
                <a href="#"><svg><use href="#i-search"/></svg>Suche</a>
                <a href="#"><svg><use href="#i-plus"/></svg>Neue Beziehung anlegen</a>
            </div>

            <section class="group">
                <h2 class="bar"><svg><use href="#i-chev"/></svg><span>Hat Empfänger für Mandantenk...</span></h2>
                <div class="group-body">
                    <article class="card">
                        <h4><span>Muster GmbH</span><svg><use href="#i-pencil"/></svg><svg><use href="#i-unlink"/></svg></h4>
                        <div>Herrn und Frau<br>Muster und Muster Mustermann<br>Musterstraße 55<br>55555 Musterstadt</div>
                    </article>
                </div>
            </section>
            <section class="group">
                <h2 class="bar"><svg><use href="#i-chev"/></svg><span>Hat Infobriefempfänger (2)</span></h2>
                <div class="group-body">
                    <article class="card blue">
                        <h4><span>mail@yvonneklotzsch.de</span><svg><use href="#i-pencil"/></svg><svg><use href="#i-unlink"/></svg></h4>
                        <div>Keine Daten vorhanden...</div>
                    </article>
                    <article class="card blue">
                        <h4><span>monika.jimenez@netcologn...</span><svg><use href="#i-pencil"/></svg><svg><use href="#i-unlink"/></svg></h4>
                        <div>Keine Daten vorhanden...</div>
                    </article>
                </div>
            </section>
            <section class="group">
                <h2 class="bar"><svg><use href="#i-chev"/></svg><span>Hat Kontoinhaber für Rechnung...</span></h2>
                <div class="group-body">
                    <article class="card">
                        <h4><span>Muster GmbH</span><svg><use href="#i-pencil"/></svg><svg><use href="#i-unlink"/></svg></h4>
                        <div>Deutsche Bank<br>IBAN: DE40760700120320970749<br>BIC: DEUTDEMM760<br><br>BLZ: 76070012<br>Kontonummer: 320970749</div>
                    </article>
                </div>
            </section>
            <section class="group">
                <h2 class="bar"><svg><use href="#i-chev"/></svg><span>Hat Rechnungsempfänger</span></h2>
                <div class="group-body">
                    <article class="card">
                        <h4><span>Muster GmbH</span><svg><use href="#i-pencil"/></svg><svg><use href="#i-unlink"/></svg></h4>
                        <div>Herrn und Frau<br>Muster und Muster Mustermann<br>Musterstraße 55<br>55555 Musterstadt<hr>yvonne.drabent@schmitzpartner.de</div>
                    </article>
                </div>
            </section>
            <section class="group">
                <h2 class="bar"><svg><use href="#i-chev"/></svg><span>Hat Rundschreiben (3)</span></h2>
                <div class="group-body">
                    <article class="card blue">
                        <h4><span>academy@schmitzpartner.de</span><svg><use href="#i-pencil"/></svg><svg><use href="#i-unlink"/></svg></h4>
                        <div>Keine Daten vorhanden...</div>
                    </article>
                    <article class="card blue">
                        <h4><span>mail@yvonneklotzsch.de</span><svg><use href="#i-pencil"/></svg><svg><use href="#i-unlink"/></svg></h4>
                        <div>Keine Daten vorhanden...</div>
                    </article>
                    <article class="card blue">
                        <h4><span>yvonne.drabent@schmitzpa...</span><svg><use href="#i-pencil"/></svg><svg><use href="#i-unlink"/></svg></h4>
                        <div>Keine Daten vorhanden...</div>
                    </article>
                </div>
            </section>
        </aside>
    </main>

    <footer class="statusbar">NUM</footer>

    <!-- Taskbar -->
    <div class="taskbar">
        <button aria-label="Start"><svg viewBox="0 0 32 32"><path d="M8 10.500l7-1v6.300H8zM16 9.400l8-1.200v7.600h-8zM8 16.800h7v6.300l-7-1zM16 16.800h8v7.600l-8-1.200z" fill="#fff"/></svg></button>
        <button class="system" aria-label="Suche"><svg viewBox="0 0 32 32"><circle cx="18.500" cy="13" r="5.500" fill="none" stroke="#fff" stroke-width="1.500"/><path d="M14.500 17L8 24" stroke="#fff" stroke-width="1.500"/></svg></button>
        <button aria-label="Aufgabenansicht"><svg viewBox="0 0 32 32"><path d="M8.500 8v3.500h11V8M8.500 24v-3.500h11V24M8.500 13.500h11v5h-11zM23.500 8v5M23.500 18v6" fill="none" stroke="#fff" stroke-width="1.300"/><path d="M22.500 14h2v3h-2z" fill="#fff"/></svg></button>
        <button class="running" aria-label="Edge"><svg viewBox="0 0 32 32"><circle cx="16" cy="16" r="12" fill="url(#g-edge)"/><path d="M4 15Q5 4 16 4q11 0 12 10 0 6-7 6-4 0-4-3 2-2 1-4-2-4-7-3-5 1-7 5z" fill="url(#g-edge2)"/><path d="M14 15q-2 8 6 10 4 0 6-3-6 3-10-2-1-2 0-4z" fill="#0a2a50"/><rect x="4" y="19" width="12" height="9" fill="#e08a1c"/><path d="M8 19v-2h4v2M4 23h12" stroke="#8a4a08" fill="none"/></svg></button>
        <button class="running" aria-label="Explorer"><svg viewBox="0 0 32 32"><path d="M5 7h8l2 2h12v4H5z" fill="#d89a18"/><path d="M5 10h22v15H5z" fill="#fad56a"/><path d="M9 26v-9h14v9h-3v-4h-8v4z" fill="#3f9ad8"/></svg></button>
        <button class="running multi" aria-label="Outlook"><svg viewBox="0 0 32 32"><path d="M11 5h15v11H11z" fill="#28a8ea"/><path d="M9 14l18 1v12H9z" fill="#1378c8"/><path d="M9 15l9 7 9-7v12H9z" fill="#1c90e0"/><rect x="4" y="10" width="12" height="13" rx="1" fill="#0a64b4"/><text class="tile" x="5" y="20">O</text></svg></button>
        <button class="running multi" aria-label="Telefonie"><svg viewBox="0 0 32 32"><path d="M5 4h22v24H9q-4-1-4-5z" fill="#f4f6f0"/><path d="M11 5q4 0 4 4-3 3-1 7 2 4 6 3l2-3 5 5q-2 6-8 6Q7 26 6 15 6 7 11 5z" fill="#7cc42c" stroke="#3f8a10"/></svg></button>
        <button aria-label="OneNote"><svg viewBox="0 0 32 32"><path d="M10 5h17v23H10z" fill="#ca64ea"/><path d="M22 5h5v8h-5z" fill="#ae4bd5"/><path d="M22 13h5v8h-5z" fill="#9332bf"/><path d="M22 21h5v7h-5z" fill="#7719aa"/><rect x="4" y="10" width="13" height="13" rx="1" fill="#7719aa"/><text class="tile" x="6" y="20">N</text></svg></button>
        <button aria-label="Snipping Tool"><svg viewBox="0 0 32 32"><path d="M5 15Q7 5 19 4q8 1 7 6-3 9-12 10-10 0-9-5z" fill="#f4f4f4" stroke="#d03030"/><path d="M7 12l13 7M23 6l-5 12" stroke="#aaa" stroke-width="1.500"/><ellipse cx="18" cy="24" rx="2.200" ry="3.500" fill="none" stroke="#2a7ac0" stroke-width="2"/><ellipse cx="24" cy="20" rx="3.500" ry="2.200" fill="none" stroke="#2a7ac0" stroke-width="2"/></svg></button>
        <button aria-label="PDF24"><svg viewBox="0 0 32 32"><circle cx="16" cy="8" r="5" fill="#f2efe6"/><ellipse cx="15" cy="17" rx="8" ry="7" fill="#e8e4da"/><ellipse cx="18" cy="13" rx="3" ry="4" fill="#d0a878"/><circle cx="18" cy="8" r="1" fill="#222"/><rect x="3" y="20" width="26" height="8" fill="#fff"/><text class="tile pdf" x="4" y="27">PDF<tspan fill="#e01010">24</tspan></text></svg></button>
        <button aria-label="Word"><svg viewBox="0 0 32 32"><path d="M10 5h17v23H10z" fill="#41a5ee"/><path d="M10 11h17v6H10z" fill="#2b7cd3"/><path d="M10 17h17v6H10z" fill="#185abd"/><path d="M10 22h17v6H10z" fill="#103f91"/><rect x="4" y="10" width="12" height="13" rx="1" fill="#185abd"/><text class="tile" x="4" y="20">W</text></svg></button>
        <button class="alert" aria-label="Teams"><svg viewBox="0 0 32 32"><circle cx="18" cy="8" r="4" fill="#7b83eb"/><circle cx="25" cy="9" r="2.500" fill="#5059c9"/><path d="M12 12h14q2 0 2 2v6q-1 6-8 6t-8-6z" fill="#6a72dd"/><rect x="4" y="9" width="12" height="12" rx="1" fill="#4b53bc"/><text class="tile" x="6" y="19">T</text><circle cx="22" cy="22" r="8" fill="#12a010"/><path d="M18.500 22l2.500 2.500 4.500-4.500" fill="none" stroke="#fff" stroke-width="2"/></svg></button>
        <button class="running" aria-label="Tresor"><svg viewBox="0 0 32 32"><circle cx="16" cy="16" r="11" fill="url(#g-lock)" stroke="#c8d4f8"/><rect x="10.500" y="14" width="11" height="8.500" rx="1" fill="#111"/><path d="M12.500 14v-2.500q0-3 3.500-3t3.500 3V14" fill="none" stroke="#111" stroke-width="2"/><path d="M11 17h10M11 19.500h10" stroke="#556"/></svg></button>
        <button class="running" aria-label="Tresor 2"><svg viewBox="0 0 32 32"><circle cx="16" cy="16" r="11" fill="url(#g-lock)" stroke="#c8d4f8"/><rect x="10.500" y="14" width="11" height="8.500" rx="1" fill="#111"/><path d="M12.500 14v-2.500q0-3 3.500-3t3.500 3V14" fill="none" stroke="#111" stroke-width="2"/><path d="M11 17h10M11 19.500h10" stroke="#556"/></svg></button>
        <button class="running current" aria-label="Stammdaten"><svg class="userpic"><use href="#i-userpic"/></svg></button>
        <div class="tray">
            <svg class="t-chev" viewBox="0 0 12 8"><path d="M1 7l5-5 5 5" fill="none" stroke="#fff" stroke-width="1.300"/></svg>
            <svg viewBox="0 0 16 16"><path d="M4.500 3.500h11v8h-9M10 11.500V14M6.500 14.500h7M.5 1.500h4v4h-4zM2.500 5.500v8h2" fill="none" stroke="#fff"/></svg>
            <svg viewBox="0 0 16 16"><path d="M.5 6v4H3l3.500 3.500v-11L3 6zM8.500 6q1 2 0 4M10.500 4q2.500 4 0 8M13 2.500q3.500 5.500 0 11" fill="none" stroke="#fff"/></svg>
            <div class="clock">11:22<br>28.05.2025</div>
            <div class="notify"><svg viewBox="0 0 16 16"><path d="M0 0h16v12H8l-4 4v-4H0z" fill="#fff"/><path d="M3 3.500h10M3 6h10M3 8.500h7" stroke="#000"/></svg><b>4</b></div>
        </div>
    </div>
</body>
</html>
```

FILE: styles.css
```css
* {
    box-sizing: border-box;
}
body {
    margin: 0;
    height: 100vh;
    display: flex;
    flex-direction: column;
    overflow: hidden;
    font-family: "Liberation Sans", Arial, sans-serif;
    font-size: 11px;
    line-height: 13px;
    color: #111;
    background: #f2f1ed;
}
a {
    color: inherit;
    text-decoration: none;
}
button, input, select, textarea {
    font: inherit;
    color: inherit;
    border: 0;
    margin: 0;
    padding: 0;
    background: none;
    border-radius: 0;
}
h2, h3, h4, p, ul {
    margin: 0;
    padding: 0;
}
svg {
    width: 16px;
    height: 16px;
    flex: none;
    display: block;
}
.sprite {
    position: absolute;
    width: 0;
    height: 0;
}
.lex, .tile {
    font-family: "Liberation Sans", Arial, sans-serif;
    font-size: 11px;
    font-weight: bold;
    fill: #fff;
}
.lex {
    font-size: 7px;
    fill: #222;
}
.pdf {
    font-size: 8px;
    fill: #222;
}

/* Title bar */
.titlebar {
    position: relative;
    display: flex;
    align-items: center;
    height: 23px;
    padding-left: 2px;
    background: #fff;
    font-family: Roboto, "Open Sans", sans-serif;
    font-size: 12px;
    line-height: 16px;
}
.app-title {
    margin-left: 5px;
}
.window-buttons {
    display: flex;
    margin-left: auto;
}
.window-buttons button {
    width: 44px;
    height: 20px;
    margin-bottom: 3px;
    display: flex;
    align-items: center;
    justify-content: center;
}
.window-buttons button:last-child {
    width: 50px;
}
.window-buttons svg {
    width: 12px;
    height: 12px;
}
.session-handle {
    position: absolute;
    top: 0;
    left: 50%;
    width: 64px;
    height: 31px;
    margin-left: -32px;
    display: flex;
    justify-content: center;
    gap: 6px;
    padding: 6px 0 7px;
    background: #1d1f21;
    border: 1px solid #555;
    border-top: 0;
    border-radius: 0 0 6px 6px;
    z-index: 2;
}
.session-handle i {
    width: 2px;
    background: #888;
}

/* Toolbars */
.toolbar {
    display: flex;
    align-items: center;
    height: 28px;
}
.toolbar-small {
    height: 25px;
}
.grip {
    width: 3px;
    height: 15px;
    margin: 0 4px;
    background: repeating-linear-gradient(#b8b8b6 0 3px, transparent 3px 6px);
}
.tool {
    width: 24px;
    height: 24px;
    display: flex;
    align-items: center;
    justify-content: center;
}
.tool.hot {
    background: #e0edcd;
}
.tool.on {
    background: #e0edcd;
    border: 1px solid #5cb22a;
}
.tool-text {
    display: flex;
    align-items: center;
    gap: 7px;
    padding: 0 4px;
    font-family: Roboto, "Open Sans", sans-serif;
    font-size: 12px;
}
.sep {
    width: 1px;
    height: 22px;
    margin: 0 3px 0 2px;
    background: #b8b8b6;
}
.overflow {
    align-self: stretch;
    width: 11px;
    margin-left: 6px;
    background: linear-gradient(#f2f1ed, #9c9b96);
    display: flex;
    flex-direction: column;
    align-items: center;
    justify-content: flex-end;
    padding-bottom: 4px;
}
.overflow::before {
    content: "";
    width: 6px;
    height: 1px;
    margin-bottom: 2px;
    background: #000;
}
.overflow::after, .caret {
    content: "";
    border: 3px solid transparent;
    border-top-color: #000;
    border-bottom: 0;
}
.caret {
    margin-left: -3px;
    border-top-color: #666;
}
.toolbar-small .overflow {
    margin-left: 4px;
}

/* Menu */
.menubar {
    position: relative;
    display: flex;
    align-items: center;
    gap: 11px;
    height: 22px;
    padding: 2px 0 0 5px;
    font-family: Roboto, "Open Sans", sans-serif;
    font-size: 12px;
}
.menu-extras {
    margin-left: 105px;
}
.tooltip {
    position: absolute;
    left: 148px;
    top: 5px;
    height: 19px;
    padding: 0 9px 0 4px;
    line-height: 18px;
    white-space: nowrap;
    background: #ffffe1;
    border: 1px solid #c8c8b0;
    border-right-color: #000;
    border-bottom-color: #000;
    z-index: 2;
}

/* Workspace */
.workspace {
    flex: 1;
    min-height: 0;
    display: flex;
    border-bottom: 1px solid #fff;
}
.nav {
    width: 256px;
    background: #fcfcf9;
}
.splitter {
    width: 7px;
    background: #e3e3e2;
    display: flex;
    align-items: center;
    justify-content: center;
}
.dots-v {
    width: 2px;
    height: 34px;
    background: repeating-linear-gradient(#999 0 2px, transparent 2px 4px);
}
.pane-head {
    display: flex;
    align-items: center;
    height: 26px;
    padding-top: 2px;
    background: #f2f1ed;
    border-bottom: 2px solid #fcfcf9;
}
.pane-head .grip {
    margin: 0 6px 0 2px;
}
.pane-head button {
    margin-left: 3px;
    width: 16px;
}
.pane-head span + button {
    margin-left: auto;
}
.pane-head button:last-child {
    margin-right: 3px;
}
.bar {
    display: flex;
    align-items: center;
    height: 20px;
    margin: 0 1px;
    padding: 0 0 1px 5px;
    background: #cfcfcf;
    font-family: "DejaVu Sans Condensed", "DejaVu Sans", Tahoma, sans-serif;
    font-size: 11px;
    font-weight: bold;
    font-stretch: condensed;
    color: #000;
    white-space: nowrap;
    gap: 10px;
}
.bar svg {
    width: 14px;
    height: 14px;
}
.nav .pane-head + .bar {
    margin-top: 1px;
}

/* Tree */
.tree {
    list-style: none;
    padding: 3px 0 0;
}
.tree-short {
    padding: 3px 0 20px;
}
.tree li {
    position: relative;
    display: flex;
    align-items: center;
    gap: 2px;
    height: 16px;
    padding-left: 5px;
    white-space: nowrap;
}
.tree a {
    padding: 0 4px 0 3px;
    line-height: 16px;
}
.tree a.selected {
    background: #c2e68c;
}
.tree .l1 {
    padding-left: 22px;
}
.tree .l2 {
    padding-left: 39px;
}
.tree .open::before {
    content: "";
    position: absolute;
    left: 9px;
    top: 5px;
    border-left: 7px solid transparent;
    border-bottom: 7px solid #999;
}
.hscroll {
    display: flex;
    align-items: center;
    height: 17px;
    margin: 0 2px 2px 4px;
    background: #f0f0f0;
}
.hscroll svg {
    width: 16px;
    height: 10px;
}
.track {
    flex: 1;
    height: 100%;
    padding: 0 28px 0 14px;
}
.thumb {
    display: block;
    height: 100%;
    background: #cdcdcd;
}

/* Document tabs */
.content {
    flex: 1;
    min-width: 0;
    display: flex;
    flex-direction: column;
}
.doc-tabs {
    display: flex;
    flex: none;
    align-items: flex-end;
    height: 28px;
    padding: 0 3px;
    background: linear-gradient(#e3e3e2 0 2px, #666c69 2px 24px, #c2e68c 24px 27px, #5cb22a 27px);
    font-family: "Open Sans", "Noto Sans", sans-serif;
    font-size: 11px;
}
.doc-tab {
    display: flex;
    align-items: center;
    justify-content: space-between;
    width: 90px;
    height: 19px;
    margin-bottom: 4px;
    padding: 0 3px;
    background: #e3e3e2;
}
.doc-tab.active {
    width: auto;
    gap: 9px;
    padding: 0 3px 0 4px;
    background: #c2e68c;
    font-family: "DejaVu Sans Condensed", "DejaVu Sans", Tahoma, sans-serif;
    font-stretch: condensed;
    font-weight: bold;
}
.doc-menu {
    margin: 0 1px 12px auto;
    border: 5px solid transparent;
    border-top-color: #fff;
    border-bottom: 0;
}

/* Document */
.document {
    flex: 1;
    min-height: 0;
    overflow: hidden;
    background: #e0e0e0;
}
.relation {
    display: flex;
    align-items: center;
    height: 84px;
    padding: 0 14px 3px 17px;
}
.big-icon {
    width: 30px;
    height: 28px;
}
.cert {
    height: 30px;
    width: 26px;
    margin-right: 7px;
}
.field {
    width: 193px;
    height: 20px;
    padding: 0 2px;
    background: #efefef;
    border: 1px solid #7a7a7a;
}
.arrow {
    position: relative;
    display: flex;
    align-items: center;
    gap: 34px;
    width: 300px;
    height: 42px;
    margin: 0 5px 0 7px;
    padding-left: 10px;
}
.arrow svg {
    position: absolute;
    left: 0;
    top: 0;
    width: 100%;
    height: 100%;
}
.arrow span {
    position: relative;
}
.select {
    position: relative;
    display: flex;
}
.select select {
    appearance: none;
    width: 185px;
    height: 21px;
    padding: 0 4px;
    background: #fff;
    border: 1px solid #7a7a7a;
}
.drop {
    position: absolute;
    right: 2px;
    top: 2px;
    width: 19px;
    height: 17px;
    display: flex;
    align-items: center;
    justify-content: center;
    border: 1px solid #999;
    background: #e0e0e0;
    pointer-events: none;
}
.drop svg {
    width: 10px;
    height: 6px;
}
.square {
    width: 22px;
    height: 21px;
    display: flex;
    align-items: center;
    justify-content: center;
    background: #e0e0e0;
    border: 1px solid #aaa;
}
.relation .square {
    margin-left: 5px;
}
.details {
    display: flex;
    min-height: 290px;
    padding: 7px 14px 0;
    background: #c0c0c0;
}
.details-plain {
    padding-top: 8px;
    background: none;
}
.col-form {
    width: 342px;
    margin-left: 5px;
}
h3 {
    font-family: "Open Sans", "Noto Sans", sans-serif;
    font-size: 12px;
    line-height: 26px;
    color: #000;
    white-space: nowrap;
}
.form-row {
    display: flex;
    align-items: center;
    height: 20px;
    margin: 8px 0 12px;
}
.form-row label {
    width: 106px;
    padding-left: 1px;
}
.typ select {
    width: 224px;
    height: 20px;
    padding: 0 2px;
    background: #efefef;
}
.typ .drop {
    right: 0;
    top: 0;
    width: 18px;
    height: 20px;
    background: #fff;
    border: 1px solid #ccc;
}
.address-card {
    width: 331px;
    height: 204px;
    padding: 26px 0 0 35px;
    border: 1px solid #000;
    background: linear-gradient(#fff, #d0d0d0) left / 31px 100% no-repeat, linear-gradient(#c8e29a, #fff);
}
.address-card strong, .address-card p {
    display: block;
    margin-bottom: 13px;
}
.key {
    display: inline-block;
    width: 49px;
}
.col-side {
    display: flex;
    flex-direction: column;
    justify-content: space-between;
    padding: 6px 0 13px;
}
.action {
    display: flex;
    align-items: center;
    gap: 3px;
    margin-left: 13px;
    white-space: nowrap;
}
.go {
    width: 12px;
    height: 12px;
}
.action .go {
    margin-left: 3px;
    margin-right: 1px;
}
.edit-spot {
    position: relative;
}
.balloon {
    position: absolute;
    left: 20px;
    bottom: 35px;
    width: 192px;
    height: 64px;
    padding: 9px 11px;
    background: #fcfcf9;
    border: 1px solid #888;
    border-bottom: 2px solid #5cb22a;
    white-space: nowrap;
}
.balloon::after {
    content: "";
    position: absolute;
    left: -1px;
    top: 62px;
    border-top: 15px solid #5cb22a;
    border-right: 13px solid transparent;
}
.balloon button {
    position: absolute;
    right: 1px;
    top: 0;
}
.chain {
    height: 16px;
    margin: 5px 0 0 -2px;
    width: 32px;
}
.note-label {
    display: block;
    margin: 7px 0 6px 1px;
}
textarea {
    display: block;
    width: 274px;
    height: 120px;
    background: #fff;
    border: 1px solid #7a7a7a;
    resize: none;
}

/* Bottom pane */
.splitter-h {
    flex: none;
    height: 6px;
    display: flex;
    align-items: center;
    justify-content: center;
    background: #e3e3e2;
}
.dots-h {
    width: 34px;
    height: 2px;
    background: repeating-linear-gradient(90deg, #999 0 2px, transparent 2px 4px);
}
.pane-tabs {
    display: flex;
    flex: none;
    height: 20px;
    background: #cac9c7;
    border-bottom: 1px solid #b4b4b2;
}
.pane-tabs a {
    height: 20px;
    padding: 0 5px;
    line-height: 20px;
    background: #e3e3e2;
    border: 1px solid #b4b4b2;
    border-left: 0;
}
.pane-tabs .active {
    background: #f2f1ed;
    border-bottom-color: #f2f1ed;
}
.pane-head.green {
    flex: none;
    height: 26px;
    background: #e0edcd;
}
.hints {
    flex: none;
    height: 184px;
    padding: 16px 9px 9px;
}
.hints-box {
    height: 159px;
    background: #fcfcf9;
    border: 1px solid #888;
}
table {
    width: 100%;
    table-layout: fixed;
    border-collapse: collapse;
}
th {
    height: 20px;
    padding: 0 2px;
    text-align: left;
    font-weight: normal;
    background: linear-gradient(#f6f6f6, #dcdcdc);
    border: 1px solid #888;
    border-top: 0;
}
.c-mark {
    width: 19px;
    background: none;
    border: 0;
}
.c-icon {
    width: 89px;
}
.c-end {
    width: 25px;
}
td {
    height: 18px;
    padding: 0 3px;
}
td .go {
    display: inline-block;
    margin-right: 2px;
    vertical-align: -2px;
}
td.icon svg {
    margin: 0 auto;
}
tbody tr:nth-child(even) td + td {
    background: #f2f1ed;
}

/* Relations pane */
.relations {
    width: 250px;
    background: #efefef;
}
.relations .pane-tabs {
    height: 21px;
    padding-top: 1px;
}
.relations .pane-head {
    height: 25px;
    padding-top: 0;
}
.relations .pane-head .grip {
    margin: 0 6px 0 3px;
}
.rel-actions {
    display: flex;
    justify-content: space-between;
    padding: 10px 24px 15px 10px;
}
.rel-actions a {
    display: flex;
    align-items: center;
    gap: 3px;
}
.group {
    margin: 0 10px 5px;
}
.group .bar {
    height: 21px;
    margin: 0;
    padding-left: 7px;
    gap: 9px;
}
.group-body {
    display: flex;
    flex-direction: column;
    gap: 3px;
    padding: 3px 3px 5px;
    background: #fcfcf9;
    border: 1px solid #cfcfcf;
    border-top: 0;
}
.card {
    padding: 0 3px 3px;
    background: #e8f0da;
}
.card.blue {
    background: #c5d5e1;
}
.card h4 {
    display: flex;
    align-items: center;
    gap: 3px;
    height: 26px;
    padding: 0 2px 0 4px;
    font-family: "DejaVu Sans Condensed", "DejaVu Sans", Tahoma, sans-serif;
    font-size: 11px;
    font-stretch: condensed;
    color: #000;
    white-space: nowrap;
}
.card h4 span {
    margin-right: auto;
}
.card div {
    padding: 5px;
    background: #fcfcf9;
}
hr {
    margin: 5px 0 7px;
    border: 0;
    border-top: 1px solid #cfcfcf;
}

/* Status bar */
.statusbar {
    height: 22px;
    padding-right: 18px;
    text-align: right;
    font-family: Roboto, "Open Sans", sans-serif;
    font-size: 12px;
    line-height: 22px;
}

/* Taskbar */
.taskbar {
    display: flex;
    height: 40px;
    background: #020408;
    color: #fff;
}
.taskbar button {
    position: relative;
    width: 49px;
    display: flex;
    align-items: center;
    justify-content: center;
}
.taskbar .system {
    width: 48px;
}
.taskbar button svg {
    width: 32px;
    height: 32px;
}
.taskbar button .userpic {
    width: 22px;
    height: 26px;
}
.running::after {
    content: "";
    position: absolute;
    left: 4px;
    right: 4px;
    bottom: 0;
    height: 2px;
    background: #76b9ed;
}
.multi::after {
    background: linear-gradient(90deg, #76b9ed 80%, #4a7aa4 80%);
}
.current {
    background: #33373b;
}
.current::after {
    left: 0;
    right: 0;
}
.taskbar .alert {
    background: #9c5420;
    border-bottom: 2px solid #ff7a10;
}
.tray {
    display: flex;
    align-items: center;
    gap: 8px;
    margin-left: auto;
    padding-right: 4px;
}
.tray svg {
    width: 16px;
    height: 16px;
}
.tray .t-chev {
    width: 12px;
    height: 8px;
    margin-right: 2px;
}
.clock {
    text-align: center;
    font-family: Roboto, "Open Sans", sans-serif;
    line-height: 18px;
}
.notify {
    position: relative;
    display: flex;
    align-items: center;
    height: 100%;
    padding: 0 20px 4px 9px;
    border-right: 1px solid #555;
}
.notify b {
    position: absolute;
    left: 17px;
    top: 18px;
    width: 16px;
    height: 16px;
    line-height: 16px;
    text-align: center;
    font-size: 12px;
    background: #333;
    border-radius: 8px;
    outline: 1px solid #777;
}
```
